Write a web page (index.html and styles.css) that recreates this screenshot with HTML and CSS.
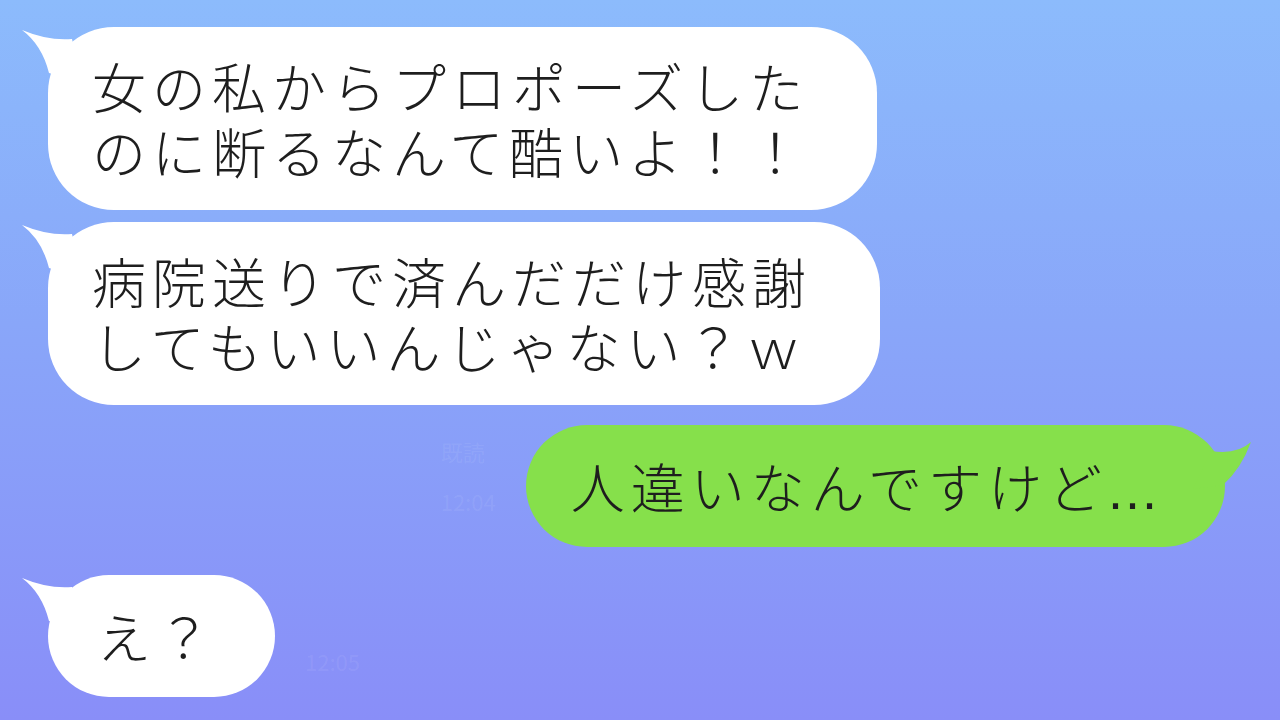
FILE: index.html
```html
<!DOCTYPE html>
<html lang="ja">
<head>
  <meta charset="UTF-8" />
  <meta name="viewport" content="width=device-width, initial-scale=1.0"/>
  <title>トーク</title>
  <link rel="stylesheet" href="styles.css">
</head>
<body>
  <div class="chat">
    <div class="bubble them big">
      <svg class="tail tail-left" viewBox="0 0 60 56" width="60" height="56"><path d="M0,3 Q26,14 50,12 L60,56 L27,46 Q20,18 0,3 Z"/></svg>
      <p><span>女の私からプロポーズした</span><span>のに断るなんて酷いよ！！</span></p>
    </div>
    <div class="bubble them big second">
      <svg class="tail tail-left" viewBox="0 0 60 56" width="60" height="56"><path d="M0,3 Q26,14 50,12 L60,56 L27,46 Q20,18 0,3 Z"/></svg>
      <p><span>病院送りで済んだだけ感謝</span><span>してもいいんじゃない？ｗ</span></p>
    </div>
    <div class="me-row">
      <div class="meta">
        <span>既読</span>
        <span>12:04</span>
      </div>
      <div class="bubble me">
        <svg class="tail tail-right" viewBox="0 0 60 64" width="60" height="64"><path d="M58,17 Q44,30 18,26 L0,64 L30,60 Q48,44 58,17 Z"/></svg>
        <p>人違いなんですけど<span class="dots">...</span></p>
      </div>
    </div>
    <div class="them-row">
      <div class="bubble them small">
        <svg class="tail tail-left" viewBox="0 0 60 56" width="60" height="56"><path d="M0,3 Q26,14 50,12 L60,56 L27,46 Q20,18 0,3 Z"/></svg>
        <p>え？</p>
      </div>
      <div class="meta">
        <span>12:05</span>
      </div>
    </div>
  </div>
</body>
</html>
```

FILE: styles.css
```css
body {
  margin: 0;
  height: 720px;
  overflow: hidden;
  background: linear-gradient(180deg, #8cbbfc 0%, #89a6f9 45%, #898ef8 100%);
  font-family: "Noto Sans CJK JP", "Noto Sans", sans-serif;
  color: #1e1e1e;
}
.chat {
  display: flex;
  flex-direction: column;
  align-items: flex-start;
  padding: 27px 55px 0 48px;
}
.bubble {
  position: relative;
  border-radius: 66px;
  font-size: 54px;
  font-weight: 300;
  line-height: 65px;
  letter-spacing: 6px;
}
.bubble p {
  position: relative;
  margin: 0;
  white-space: nowrap;
}
.big p {
  display: flex;
  flex-direction: column;
}
.tail {
  position: absolute;
  top: 0;
}
.tail-left {
  left: -26px;
}
.tail-right {
  right: -28px;
}
.them {
  background: #fff;
}
.them .tail path {
  fill: #fff;
}
.big {
  padding: 26px 68px 27px 44px;
}
.second {
  margin-top: 12px;
}
.me-row {
  align-self: flex-end;
  display: flex;
  align-items: center;
  gap: 30px;
  margin-top: 20px;
}
.me {
  background: #86e04b;
  padding: 28px 66px 29px 45px;
  border-radius: 61px;
}
.me .tail path {
  fill: #86e04b;
}
.dots {
  font-family: "Liberation Sans", sans-serif;
  line-height: 1;
  letter-spacing: 2px;
}
.them-row {
  display: flex;
  align-items: flex-end;
  gap: 30px;
  margin-top: 28px;
}
.small {
  padding: 28px 58px 29px 49px;
  border-radius: 61px;
}
.meta {
  display: flex;
  flex-direction: column;
  gap: 18px;
  font-size: 22px;
  color: rgba(255, 255, 255, 0.08);
  padding-bottom: 20px;
}
```
